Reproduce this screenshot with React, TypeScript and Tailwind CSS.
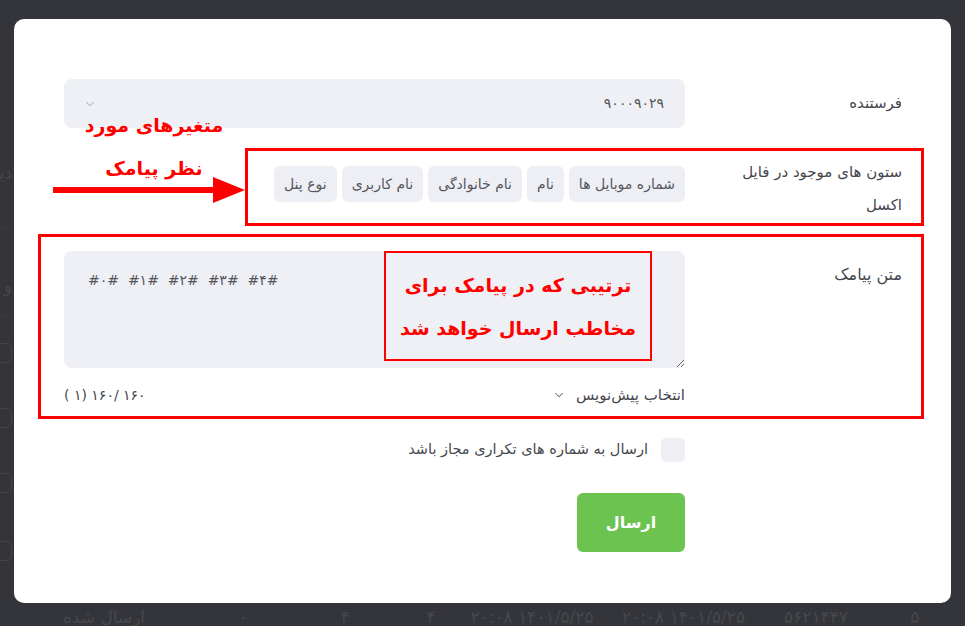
import { ChevronDown } from 'lucide-react'

const CHIPS = ['شماره موبایل ها', 'نام', 'نام خانوادگی', 'نام کاربری', 'نوع پنل']

// faint table row of the page behind the dialog (right to left)
const BG_ROW = [
  { text: '۵', w: 'w-[100px]' },
  { text: '۵۶۲۱۴۴۷', w: 'w-[98px]' },
  { text: '۲۰:۰۸ ۱۴۰۱/۵/۲۵', w: 'w-[167px]', ltr: true },
  { text: '۲۰:۰۸ ۱۴۰۱/۵/۲۵', w: 'w-[136px]', ltr: true },
  { text: '۴', w: 'w-[66px]' },
  { text: '۴', w: 'w-[106px]' },
  { text: '۰', w: 'w-[98px]' },
  { text: 'ارسال شده', w: 'w-[180px]' },
]

function PageBehind() {
  return (
    <div className="flex h-full flex-col">
      <div className="flex-1">
        <div className="-ml-[28px] flex w-[40px] flex-col items-end pt-[163px] text-[17px] leading-[20px] text-[#46474c]">
          <span>دیگ</span>
          <div className="mt-[44px] h-px w-full bg-[#3b3c41]" />
          <span className="mt-[48px]">و</span>
          <div className="mt-[20px] h-px w-full bg-[#3b3c41]" />
          <div className="mt-[26px] h-[20px] w-full rounded-md border border-[#434449]" />
          <div className="mt-[45px] h-[20px] w-full rounded-md border border-[#434449]" />
          <div className="mt-[45px] h-[20px] w-full rounded-md border border-[#434449]" />
          <div className="mt-[48px] h-[20px] w-full rounded-md border border-[#434449]" />
        </div>
      </div>
      <div dir="rtl" className="flex h-[19px] text-[17px] leading-[20px] text-[#46474c]">
        {BG_ROW.map((c, i) => (
          <div key={i} dir={c.ltr ? 'ltr' : undefined} className={`${c.w} shrink-0 text-center`}>{c.text}</div>
        ))}
      </div>
    </div>
  )
}

function Arrow() {
  return (
    <svg width="192" height="26" viewBox="0 0 192 26" className="absolute left-[39px] top-[158px]">
      <rect x="0" y="10" width="165" height="6" fill="#ff0000" />
      <polygon points="160,0 192,13 160,26" fill="#ff0000" />
    </svg>
  )
}

export default function App() {
  return (
    <div className="relative h-[626px] w-[965px] overflow-hidden bg-[#34353a] font-['DejaVu_Sans',sans-serif]">
      <PageBehind />

      {/* dialog */}
      <div
        dir="rtl"
        className="absolute left-[14px] top-[19px] h-[584px] w-[937px] rounded-[10px] bg-white pl-[50px] pr-[49px] pt-[60px] text-[#45464d]"
      >
        {/* sender */}
        <div className="flex items-center">
          <div className="w-[217px] shrink-0 text-[15px]">فرستنده</div>
          <div className="flex h-[49px] flex-1 items-center justify-between rounded-lg bg-[#eff0f5] pl-[19px] pr-[21px] text-[14px] text-[#555]">
            <span>۹۰۰۰۹۰۲۹</span>
            <ChevronDown className="h-[14px] w-[14px] text-[#9a9ba1]" strokeWidth={1.5} />
          </div>
        </div>

        {/* excel columns */}
        <div className="mt-[28px] flex items-start">
          <div className="w-[217px] shrink-0 text-[15px] leading-[33px]">
            ستون های موجود در فایل
            <br />
            اکسل
          </div>
          <div className="mt-[10px] flex flex-1 gap-[5px]">
            {CHIPS.map((c) => (
              <span key={c} className="flex h-[36px] items-center rounded-md bg-[#eeeff4] px-[10px] text-[14px] text-[#55565c]">
                {c}
              </span>
            ))}
          </div>
        </div>

        {/* message text */}
        <div className="mt-[29px] flex items-start">
          <div className="w-[217px] shrink-0 pt-[14px] text-[16px] leading-[20px]">متن پیامک</div>
          <div className="flex-1">
            <div className="relative">
              <textarea
                dir="ltr"
                readOnly
                defaultValue={'#۰#  #۱#  #۲#  #۳#  #۴#'}
                className="block h-[117px] w-full resize-y rounded-lg bg-[#eff0f5] px-[24px] pt-[17px] text-left text-[14px] leading-[24px] tracking-[0.5px] text-[#55565c] outline-none"
              />
              <div className="pointer-events-none absolute left-[320px] top-0 flex h-[110px] w-[268px] flex-col items-center justify-center border-2 border-[#ff0000] pt-[2px] text-[19px] font-bold leading-[43px] text-[#ff0000]">
                <span>ترتیبی که در پیامک برای</span>
                <span>مخاطب ارسال خواهد شد</span>
              </div>
            </div>
            <div className="mt-[17px] flex items-center justify-between text-[15px] leading-[20px]">
              <div className="flex items-center gap-[10px] text-[#45464d]">
                <span>انتخاب پیش‌نویس</span>
                <ChevronDown className="h-[14px] w-[14px] text-[#6b6c72]" strokeWidth={1.75} />
              </div>
              <span dir="ltr" className="text-[14px] text-[#45464d]">( ۱)  ۱۶۰/ ۱۶۰</span>
            </div>
          </div>
        </div>

        {/* duplicate numbers */}
        <div className="mt-[33px] flex">
          <div className="w-[217px] shrink-0" />
          <label className="flex items-center gap-[13px] text-[14.5px] text-[#45464d]">
            <span className="h-[24px] w-[24px] rounded-[5px] bg-[#eeeff4]" />
            <span>ارسال به شماره های تکراری مجاز باشد</span>
          </label>
        </div>

        {/* submit */}
        <div className="mt-[31px] flex">
          <div className="w-[217px] shrink-0" />
          <button className="flex h-[59px] w-[108px] items-center justify-center rounded-md bg-[#6cc350] text-[16px] font-bold text-white">
            ارسال
          </button>
        </div>

        {/* annotations */}
        <div className="pointer-events-none absolute left-[231px] top-[129px] h-[78px] w-[679px] border-[3px] border-[#ff0000]" />
        <div className="pointer-events-none absolute left-[24px] top-[215px] h-[185px] w-[886px] border-[3px] border-[#ff0000]" />
        <div className="pointer-events-none absolute left-[60px] top-[85px] flex w-[160px] flex-col items-center text-[19px] font-bold leading-[43px] text-[#ff0000]">
          <span>متغیرهای مورد</span>
          <span>نظر پیامک</span>
        </div>
        <Arrow />
      </div>
    </div>
  )
}
